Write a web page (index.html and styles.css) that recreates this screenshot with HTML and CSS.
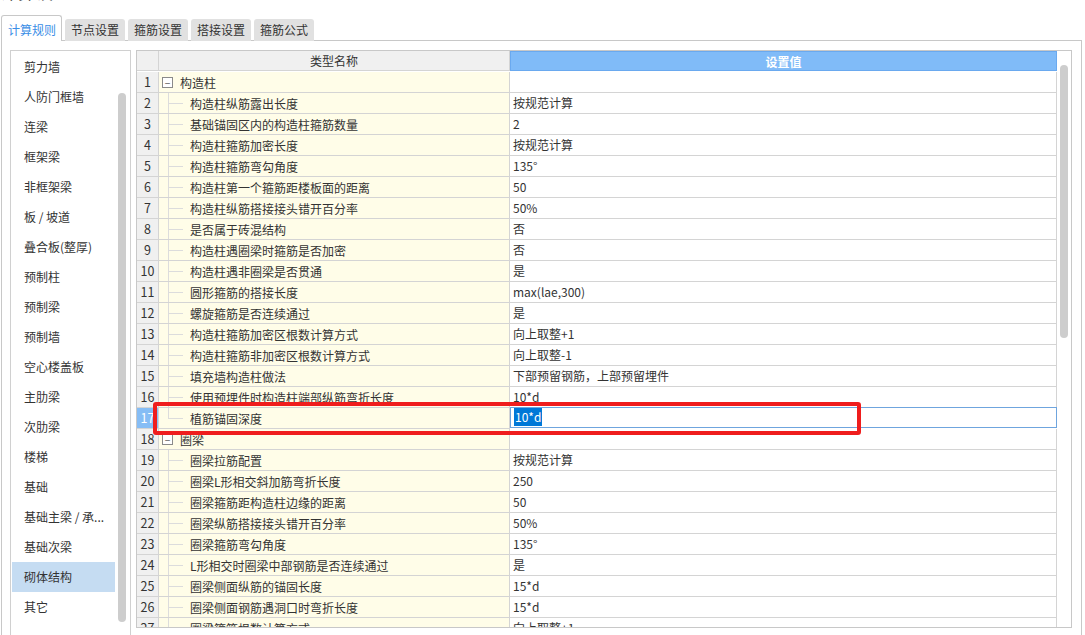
FILE: index.html
```html
<!DOCTYPE html>
<html lang="zh-CN">
<head>
<meta charset="utf-8">
<title>计算设置</title>
<link rel="stylesheet" href="styles.css">
</head>
<body>
<div class="title"><span>计算设置</span></div>
<div class="tabs">
  <div class="tab active">计算规则</div>
  <div class="tab">节点设置</div>
  <div class="tab">箍筋设置</div>
  <div class="tab">搭接设置</div>
  <div class="tab">箍筋公式</div>
</div>
<div class="panel">
  <div class="sidebar">
    <ul class="side-list">
      <li>剪力墙</li>
      <li>人防门框墙</li>
      <li>连梁</li>
      <li>框架梁</li>
      <li>非框架梁</li>
      <li>板 / 坡道</li>
      <li>叠合板(整厚)</li>
      <li>预制柱</li>
      <li>预制梁</li>
      <li>预制墙</li>
      <li>空心楼盖板</li>
      <li>主肋梁</li>
      <li>次肋梁</li>
      <li>楼梯</li>
      <li>基础</li>
      <li>基础主梁 / 承...</li>
      <li>基础次梁</li>
      <li class="sel">砌体结构</li>
      <li>其它</li>
    </ul>
    <div class="side-scroll"></div>
  </div>
  <div class="grid-box">
    <div class="grid">
      <div class="hd num"></div><div class="hd name">类型名称</div><div class="hd val">设置值</div>

      <div class="c num">1</div><div class="c name group"><span class="box">−</span>构造柱</div><div class="c val"></div>
      <div class="c num">2</div><div class="c name"><span class="tree"></span>构造柱纵筋露出长度</div><div class="c val">按规范计算</div>
      <div class="c num">3</div><div class="c name"><span class="tree"></span>基础锚固区内的构造柱箍筋数量</div><div class="c val">2</div>
      <div class="c num">4</div><div class="c name"><span class="tree"></span>构造柱箍筋加密长度</div><div class="c val">按规范计算</div>
      <div class="c num">5</div><div class="c name"><span class="tree"></span>构造柱箍筋弯勾角度</div><div class="c val">135°</div>
      <div class="c num">6</div><div class="c name"><span class="tree"></span>构造柱第一个箍筋距楼板面的距离</div><div class="c val">50</div>
      <div class="c num">7</div><div class="c name"><span class="tree"></span>构造柱纵筋搭接接头错开百分率</div><div class="c val">50%</div>
      <div class="c num">8</div><div class="c name"><span class="tree"></span>是否属于砖混结构</div><div class="c val">否</div>
      <div class="c num">9</div><div class="c name"><span class="tree"></span>构造柱遇圈梁时箍筋是否加密</div><div class="c val">否</div>
      <div class="c num">10</div><div class="c name"><span class="tree"></span>构造柱遇非圈梁是否贯通</div><div class="c val">是</div>
      <div class="c num">11</div><div class="c name"><span class="tree"></span>圆形箍筋的搭接长度</div><div class="c val">max(lae,300)</div>
      <div class="c num">12</div><div class="c name"><span class="tree"></span>螺旋箍筋是否连续通过</div><div class="c val">是</div>
      <div class="c num">13</div><div class="c name"><span class="tree"></span>构造柱箍筋加密区根数计算方式</div><div class="c val">向上取整+1</div>
      <div class="c num">14</div><div class="c name"><span class="tree"></span>构造柱箍筋非加密区根数计算方式</div><div class="c val">向上取整-1</div>
      <div class="c num">15</div><div class="c name"><span class="tree"></span>填充墙构造柱做法</div><div class="c val">下部预留钢筋，上部预留埋件</div>
      <div class="c num">16</div><div class="c name"><span class="tree"></span>使用预埋件时构造柱端部纵筋弯折长度</div><div class="c val">10*d</div>
      <div class="c num cur">17</div><div class="c name"><span class="tree last"></span>植筋锚固深度</div><div class="c val edit"><span class="selected">10*d</span></div>
      <div class="c num">18</div><div class="c name group"><span class="box">−</span>圈梁</div><div class="c val"></div>
      <div class="c num">19</div><div class="c name"><span class="tree"></span>圈梁拉筋配置</div><div class="c val">按规范计算</div>
      <div class="c num">20</div><div class="c name"><span class="tree"></span>圈梁L形相交斜加筋弯折长度</div><div class="c val">250</div>
      <div class="c num">21</div><div class="c name"><span class="tree"></span>圈梁箍筋距构造柱边缘的距离</div><div class="c val">50</div>
      <div class="c num">22</div><div class="c name"><span class="tree"></span>圈梁纵筋搭接接头错开百分率</div><div class="c val">50%</div>
      <div class="c num">23</div><div class="c name"><span class="tree"></span>圈梁箍筋弯勾角度</div><div class="c val">135°</div>
      <div class="c num">24</div><div class="c name"><span class="tree"></span>L形相交时圈梁中部钢筋是否连续通过</div><div class="c val">是</div>
      <div class="c num">25</div><div class="c name"><span class="tree"></span>圈梁侧面纵筋的锚固长度</div><div class="c val">15*d</div>
      <div class="c num">26</div><div class="c name"><span class="tree"></span>圈梁侧面钢筋遇洞口时弯折长度</div><div class="c val">15*d</div>
      <div class="c num">27</div><div class="c name"><span class="tree"></span>圈梁箍筋根数计算方式</div><div class="c val">向上取整+1</div>
    </div>
    <div class="grid-scroll"><div class="thumb"></div></div>
  </div>
</div>
<div class="annot"></div>
</body>
</html>
```
FILE: styles.css
```css
* { box-sizing: border-box; }
html, body { margin: 0; padding: 0; }
body {
  position: relative;
  width: 1085px;
  height: 635px;
  overflow: hidden;
  background: #fff;
  font-family: "Noto Sans CJK SC", "Microsoft YaHei", sans-serif;
  font-size: 12px;
  color: #333;
}
.title {
  height: 15px;
  overflow: hidden;
}
.title span {
  display: block;
  margin-top: -18px;
  font-size: 17px;
  line-height: 20px;
  color: #222;
  letter-spacing: 1px;
}
.tabs {
  display: flex;
  align-items: flex-end;
  gap: 3px;
  height: 26px;
  margin-left: 1px;
  position: relative;
  z-index: 2;
}
.tab {
  height: 22px;
  line-height: 22px;
  padding: 0 6px;
  background: #e1e1e1;
  border-radius: 3px 3px 0 0;
  color: #333;
  white-space: nowrap;
}
.tab.active {
  height: 26px;
  line-height: 28px;
  background: #fff;
  border: 1px solid #c8c8c8;
  border-bottom: none;
  color: #3a8ee6;
  padding: 0 6px;
  width: 61px;
}
.panel {
  margin-top: -1px;
  margin-left: 1px;
  width: 1081px;
  height: 620px;
  border: 1px solid #c8c8c8;
  padding: 9px 9px 0 8px;
  display: flex;
  gap: 5px;
}
.sidebar {
  width: 121px;
  height: 600px;
  border: 1px solid #d0d0d0;
  display: flex;
  flex-shrink: 0;
}
.side-list {
  list-style: none;
  margin: 1px 0 0 1px;
  padding: 0;
  width: 103px;
}
.side-list li {
  height: 30px;
  line-height: 30px;
  padding-left: 12px;
  white-space: nowrap;
  overflow: hidden;
}
.side-list li.sel { background: #c5dcf2; }
.side-scroll {
  width: 8px;
  height: 529px;
  margin: 42px 0 0 3px;
  border-radius: 4px;
  background: #cdcdcd;
}
.grid-box {
  width: 936px;
  height: 578px;
  border: 1px solid #c8c8c8;
  display: flex;
  overflow: hidden;
  flex-shrink: 0;
}
.grid {
  display: grid;
  grid-template-columns: 22px 351px 547px;
  grid-auto-rows: 21px;
  align-content: start;
  width: 920px;
}
.hd {
  height: 20px;
  line-height: 20px;
  text-align: center;
  background: #f0f0f0;
  border-right: 1px solid #d4d4d4;
  border-bottom: 1px solid #d4d4d4;
}
.hd.val {
  background: #80bbf8;
  border: 1px solid #6aa9ef;
  color: #fff;
  font-weight: bold;
}
.c {
  height: 21px;
  line-height: 19px;
  border-right: 1px solid #d4d4d4;
  border-bottom: 1px solid #d4d4d4;
  white-space: nowrap;
  overflow: hidden;
}
.c.num {
  background: #f0f0f0;
  text-align: center;
  font-size: 12.5px;
}
.c.num.cur {
  background: #86bdf5;
  color: #fff;
}
.c.name {
  background: #fffde8;
  display: flex;
  align-items: center;
}
.c.name.group { padding-left: 3px; }
.box {
  width: 11px;
  height: 11px;
  border: 1px solid #8a8a8a;
  font-size: 10px;
  line-height: 9px;
  text-align: center;
  color: #555;
  margin-right: 7px;
  background: #fff;
}
.tree {
  position: relative;
  width: 31px;
  height: 20px;
  flex-shrink: 0;
}
.tree::before {
  content: "";
  position: absolute;
  left: 9px;
  top: 0;
  height: 21px;
  border-left: 1px solid #dcdcdc;
}
.tree.last::before { height: 10px; }
.tree::after {
  content: "";
  position: absolute;
  left: 9px;
  top: 10px;
  width: 15px;
  border-top: 1px solid #dcdcdc;
}
.c.val {
  background: #fff;
  padding-left: 3px;
}
.c.val.edit {
  border: 1px solid #6fa5de;
  padding-left: 3px;
  margin-top: -1px;
  height: 21px;
  line-height: 18px;
}
.selected {
  background: #0078d7;
  color: #fff;
  padding: 1px 1px;
}
.grid-scroll {
  width: 14px;
  flex-shrink: 0;
  padding: 14px 0 0 3px;
}
.thumb {
  width: 8px;
  height: 273px;
  border-radius: 4px;
  background: #cdcdcd;
}
.annot {
  position: absolute;
  left: 153px;
  top: 402px;
  width: 708px;
  height: 33px;
  border: 4px solid #ef1d1d;
  border-radius: 3px;
  pointer-events: none;
}
```
